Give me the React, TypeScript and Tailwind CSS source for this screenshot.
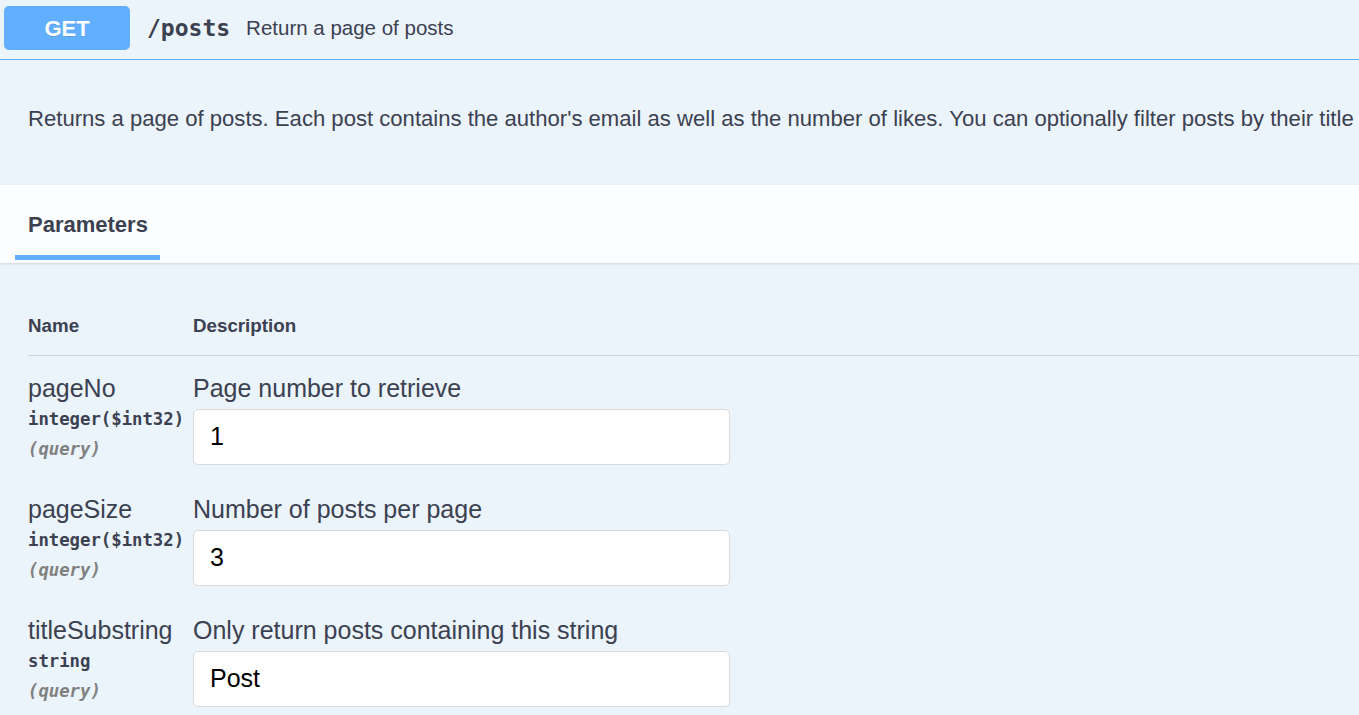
import React from 'react';

const sans = "font-['Liberation_Sans',Arial,sans-serif]";
const mono = "font-['DejaVu_Sans_Mono','Liberation_Mono',monospace]";

type Param = { name: string; type: string; desc: string; value: string };

const params: Param[] = [
  { name: 'pageNo', type: 'integer($int32)', desc: 'Page number to retrieve', value: '1' },
  { name: 'pageSize', type: 'integer($int32)', desc: 'Number of posts per page', value: '3' },
  { name: 'titleSubstring', type: 'string', desc: 'Only return posts containing this string', value: 'Post' },
];

const TypeLabel: React.FC<{ type: string }> = ({ type }) => {
  const idx = type.indexOf('(');
  if (idx < 0) return <span className="font-bold">{type}</span>;
  return (
    <>
      <span className="font-bold">{type.slice(0, idx)}</span>
      <span className="font-semibold">{type.slice(idx)}</span>
    </>
  );
};

const ParamRow: React.FC<{ p: Param }> = ({ p }) => (
  <div className="flex h-[121px]">
    {/* Name column */}
    <div className="w-[165px] shrink-0">
      <div className="text-[25px] leading-[32px] text-[#3b4151]">{p.name}</div>
      <div className={`${mono} text-[17.3px] leading-[30px] text-[#3b4151]`}>
        <TypeLabel type={p.type} />
      </div>
      <div className={`${mono} text-[17.3px] leading-[30px] font-semibold italic text-[#808080]`}>(query)</div>
    </div>
    {/* Description column */}
    <div className="flex-1">
      <div className="text-[25px] leading-[32px] text-[#3b4151]">{p.desc}</div>
      <div className="mt-[5px] flex h-[56px] w-[537px] items-center rounded-[5px] border border-[#d9d9d9] bg-white pl-[16px] text-[25px] text-black">
        {p.value}
      </div>
    </div>
  </div>
);

export default function App() {
  return (
    <div className={`${sans} h-[715px] w-full overflow-hidden bg-[#ebf3fb] text-[#3b4151]`}>
      {/* Summary */}
      <div className="flex h-[60px] items-start border-b border-[#61affe] pl-[4px] pt-[6px]">
        <div className="flex h-[44px] w-[126px] items-center justify-center rounded-[5px] bg-[#61affe] text-[22px] font-bold text-white [text-shadow:0_1px_0_rgba(0,0,0,0.1)]">
          GET
        </div>
        <div className={`${mono} ml-[17px] mt-[7px] text-[23px] font-bold leading-[30px]`}>/posts</div>
        <div className="ml-[16px] mt-[7px] text-[20.5px] leading-[30px]">Return a page of posts</div>
      </div>

      {/* Description */}
      <div className="flex h-[125px] items-center whitespace-nowrap pl-[28px] pb-[8px] text-[22.1px]">
        Returns a page of posts. Each post contains the author's email as well as the number of likes. You can optionally filter posts by their title
      </div>

      {/* Tab header */}
      <div className="flex h-[78px] items-end bg-[#fbfdfe] pl-[15px] shadow-[0_1px_2px_rgba(0,0,0,0.12)]">
        <div className="flex h-full w-[145px] flex-col">
          <div className="flex flex-1 items-center pl-[13px] pt-[9px] text-[22px] font-bold">Parameters</div>
          <div className="mb-[3px] h-[5px] bg-[#61affe]" />
        </div>
      </div>

      {/* Table */}
      <div className="pl-[28px] pt-[42px]">
        <div className="flex h-[51px] items-start border-b border-[#ccd3dd] pt-[7px] text-[18.75px] font-bold">
          <div className="w-[165px]">Name</div>
          <div>Description</div>
        </div>
        <div className="pt-[16px]">
          {params.map((p) => (
            <ParamRow key={p.name} p={p} />
          ))}
        </div>
      </div>
    </div>
  );
}
